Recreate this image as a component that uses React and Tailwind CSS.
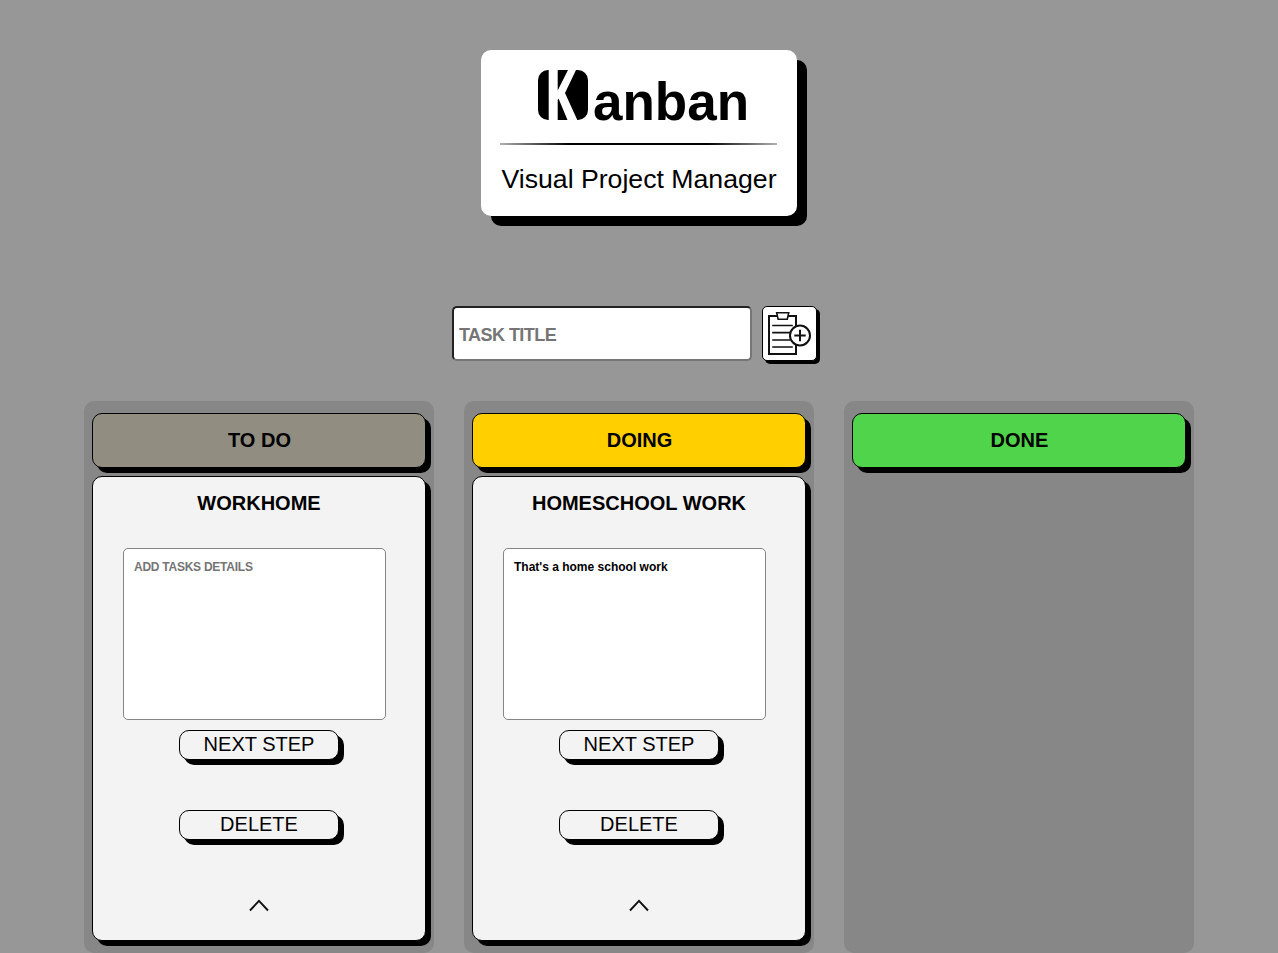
function KLogo() {
  return (
    <svg className="block size-[50px] rounded-[10px] bg-black" viewBox="0 0 50 50" fill="#fff">
      <path d="M10.700 0H19.700V20.500L30 0H38L27 23 39.300 50H29.500L20.500 28.500 19.700 30V50H10.700z" />
    </svg>
  );
}

function AddTaskIcon() {
  return (
    <svg className="block size-[45px]" viewBox="0 0 45 45" fill="none" stroke="#111" strokeWidth="2">
      <path d="M10 5H2V43H29V34M29 15V5H21" />
      <path d="M9.700 1.800H21.700L20.300 8.200H11.100L9.700 1.800Z" strokeWidth="1.600" />
      <path d="M5.200 14.500H25.800M5.200 21.600H23M5.200 29H23M5.200 36H25.800" strokeWidth="1.700" />
      <circle cx="33" cy="24.500" r="10" fill="#fff" />
      <path d="M27.300 24.500H38.700M33 18.800V30.200" />
    </svg>
  );
}

function StepButton({ children }) {
  return (
    <button className="flex h-[30px] w-40 justify-center rounded-[10px] border border-black bg-[#f3f3f3] text-xl leading-[27px] shadow-[5px_5px_0_#000]">
      {children}
    </button>
  );
}

function Card({ title, details }) {
  return (
    <article className="mt-2 flex h-[465px] flex-col items-center rounded-[10px] border border-black bg-[#f3f3f3] shadow-[5px_5px_0_#000]">
      <h3 className="mt-[15px] text-xl font-bold leading-[23px]">{title}</h3>
      <textarea
        className="mt-[33px] mr-[9px] block h-[172px] w-[263px] resize-none rounded-[5px] border border-[#858585] bg-white px-[10px] py-[10px] text-[12px] font-bold leading-4 placeholder:text-[#757575] placeholder:tracking-[-0.25px]"
        placeholder="ADD TASKS DETAILS"
        defaultValue={details}
      />
      <div className="mt-[10px] flex flex-col gap-[50px]">
        <StepButton>NEXT STEP</StepButton>
        <StepButton>DELETE</StepButton>
      </div>
      <svg className="mt-[58px] block h-4 w-5" viewBox="0 0 20 16" fill="none" stroke="#111" strokeWidth="1.900">
        <path d="M1 12.500L10 2.800L19 12.500" />
      </svg>
    </article>
  );
}

function Column({ name, color, tasks }) {
  return (
    <section className="h-[552px] w-[350px] rounded-[10px] bg-[#878787] px-2 pt-3">
      <h2 className={`flex h-[55px] items-center justify-center rounded-[10px] border border-black pb-px pl-px text-xl font-bold shadow-[5px_5px_0_#000] ${color}`}>
        {name}
      </h2>
      {tasks.map((task) => (
        <Card key={task.title} {...task} />
      ))}
    </section>
  );
}

const columns = [
  { name: "TO DO", color: "bg-[#918d80]", tasks: [{ title: "WORKHOME", details: "" }] },
  { name: "DOING", color: "bg-[#ffcf00]", tasks: [{ title: "HOMESCHOOL WORK", details: "That's a home school work" }] },
  { name: "DONE", color: "bg-[#50d44b]", tasks: [] },
];

export default function App() {
  return (
    <div className="flex h-[953px] w-full flex-col items-center overflow-hidden bg-[#979797] pt-[50px] font-['Liberation_Sans',Arial,sans-serif] text-black">
      <header className="flex h-[166px] w-[316px] flex-col items-center rounded-[10px] bg-white pt-5 shadow-[10px_10px_0_#000]">
        <h1 className="ml-[9px] flex h-[50px] gap-[5px]">
          <KLogo />
          <span className="mt-0.5 text-[53px] font-bold leading-[60px]">anban</span>
        </h1>
        <div className="mt-[23px] mr-px h-0.5 w-[277px] bg-[linear-gradient(90deg,#b0b0b0,#000_25%,#000_75%,#b0b0b0)]" />
        <p className="mt-[18px] whitespace-nowrap text-[26.667px] leading-8">Visual Project Manager</p>
      </header>
      <form className="mt-[90px] mr-[9px] flex gap-[10px]" onSubmit={(e) => e.preventDefault()}>
        <input
          className="h-[55px] w-[300px] rounded-[5px] border-2 border-t-[#222] border-r-[#767676] border-b-[#767676] border-l-[#222] bg-white pt-[3px] pl-[5px] text-[18px] font-bold tracking-[-0.55px] placeholder:text-[#757575]"
          placeholder="TASK TITLE"
        />
        <button aria-label="Add task" className="flex size-[55px] items-center justify-center rounded-[5px] border border-black bg-white shadow-[3px_3px_0_#000]">
          <AddTaskIcon />
        </button>
      </form>
      <main className="mt-10 flex gap-[30px]">
        {columns.map((column) => (
          <Column key={column.name} {...column} />
        ))}
      </main>
    </div>
  );
}
